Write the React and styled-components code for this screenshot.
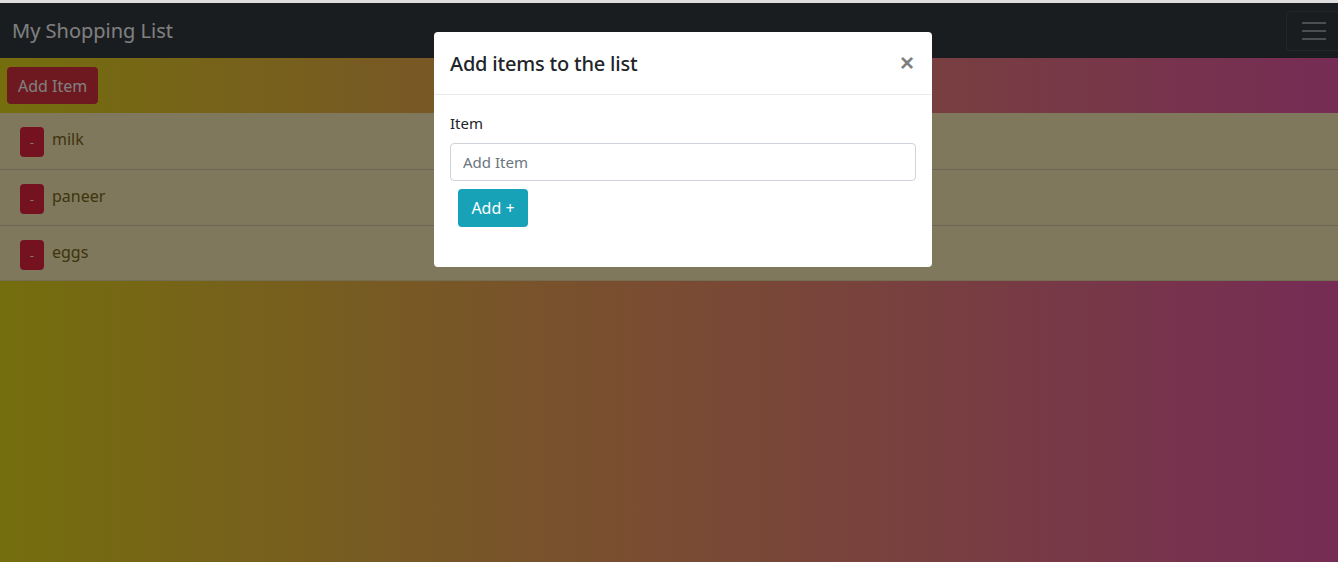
import React from "react";
import styled, { createGlobalStyle } from "styled-components";

const GlobalStyle = createGlobalStyle`
  html, body {
    margin: 0;
    padding: 0;
    height: 100%;
  }
  body {
    font-family: "Noto Sans", "Open Sans", sans-serif;
    background: #e0e0e0;
    overflow: hidden;
  }
`;

const Page = styled.div`
  display: flex;
  flex-direction: column;
  height: 562px;
  border-top: 3px solid #dedede;
  box-sizing: border-box;
`;

const Navbar = styled.nav`
  display: flex;
  align-items: center;
  justify-content: space-between;
  height: 55px;
  padding: 0 0 0 12px;
  background: #343a40;
  flex-shrink: 0;
`;

const Brand = styled.span`
  font-size: 20px;
  color: #fff;
`;

const Toggler = styled.button`
  width: 56px;
  height: 40px;
  margin-right: -4px;
  background: transparent;
  border: 1px solid rgba(255, 255, 255, 0.1);
  border-radius: 4px;
  display: flex;
  flex-direction: column;
  align-items: center;
  justify-content: center;
  gap: 6px;
  padding: 0;
`;

const TogglerBar = styled.span`
  display: block;
  width: 24px;
  height: 2px;
  background: rgba(255, 255, 255, 0.5);
`;

const Content = styled.main`
  flex: 1;
  background: linear-gradient(to right, #eadc1c, #f49866 50%, #ec58aa);
  padding-top: 9px;
`;

const AddButton = styled.button`
  margin-left: 7px;
  height: 37px;
  padding: 0 11px;
  font-family: inherit;
  font-size: 16px;
  color: #fff;
  background: #dc3040;
  border: none;
  border-radius: 4px;
`;

const List = styled.ul`
  list-style: none;
  margin: 9px 0 0;
  padding: 0;
`;

const Row = styled.li`
  display: flex;
  align-items: flex-start;
  height: 56px;
  box-sizing: border-box;
  padding: 14px 20px 0;
  background: #fef0b8;
  border-top: 1px solid #d8ccaa;
  &:first-child {
    border-top: none;
  }
  &:last-child {
    border-bottom: 1px solid #e8dca6;
  }
`;

const RemoveButton = styled.button`
  width: 24px;
  height: 30px;
  margin-right: 8px;
  padding: 0;
  font-family: inherit;
  font-size: 12px;
  color: #fff;
  background: #e8263e;
  border: none;
  border-radius: 4px;
`;

const ItemName = styled.span`
  font-size: 16px;
  line-height: 24px;
  color: #7c6a1c;
`;

const Backdrop = styled.div`
  position: fixed;
  top: 3px;
  left: 0;
  right: 0;
  bottom: 0;
  background: rgba(0, 0, 0, 0.5);
`;

const Modal = styled.div`
  position: fixed;
  top: 32px;
  left: 434px;
  width: 498px;
  background: #fff;
  border-radius: 4px;
  overflow: hidden;
`;

const ModalHeader = styled.div`
  display: flex;
  align-items: center;
  justify-content: space-between;
  height: 62px;
  padding: 0 16px;
  border-bottom: 1px solid #e9ecef;
`;

const ModalTitle = styled.h5`
  margin: 0;
  font-size: 20px;
  font-weight: 500;
  color: #212529;
  letter-spacing: -0.2px;
`;

const CloseButton = styled.button`
  background: transparent;
  border: none;
  padding: 0;
  margin-right: 2px;
  font-size: 24px;
  font-weight: 700;
  line-height: 1;
  color: #000;
  opacity: 0.5;
  font-family: "Liberation Sans", sans-serif;
`;

const ModalBody = styled.div`
  padding: 18px 16px 40px;
`;

const Label = styled.label`
  display: block;
  font-size: 15px;
  color: #212529;
  margin-bottom: 10px;
`;

const Input = styled.input`
  display: block;
  width: 100%;
  height: 38px;
  box-sizing: border-box;
  padding: 0 12px;
  font-family: inherit;
  font-size: 15px;
  border: 1px solid #ced4da;
  border-radius: 4px;
  &::placeholder {
    color: #6c757d;
  }
`;

const SubmitButton = styled.button`
  margin: 8px 0 0 8px;
  height: 38px;
  width: 70px;
  padding: 0;
  font-family: inherit;
  font-size: 16px;
  color: #fff;
  background: #17a2b8;
  border: none;
  border-radius: 4px;
`;

const items = ["milk", "paneer", "eggs"];

const App = () => {
  return (
    <>
      <GlobalStyle />
      <Page>
        <Navbar>
          <Brand>My Shopping List</Brand>
          <Toggler>
            <TogglerBar />
            <TogglerBar />
            <TogglerBar />
          </Toggler>
        </Navbar>
        <Content>
          <AddButton>Add Item</AddButton>
          <List>
            {items.map((item) => (
              <Row key={item}>
                <RemoveButton>-</RemoveButton>
                <ItemName>{item}</ItemName>
              </Row>
            ))}
          </List>
        </Content>
      </Page>
      <Backdrop />
      <Modal>
        <ModalHeader>
          <ModalTitle>Add items to the list</ModalTitle>
          <CloseButton>×</CloseButton>
        </ModalHeader>
        <ModalBody>
          <Label>Item</Label>
          <Input placeholder="Add Item" />
          <SubmitButton>Add +</SubmitButton>
        </ModalBody>
      </Modal>
    </>
  );
};

export default App;
